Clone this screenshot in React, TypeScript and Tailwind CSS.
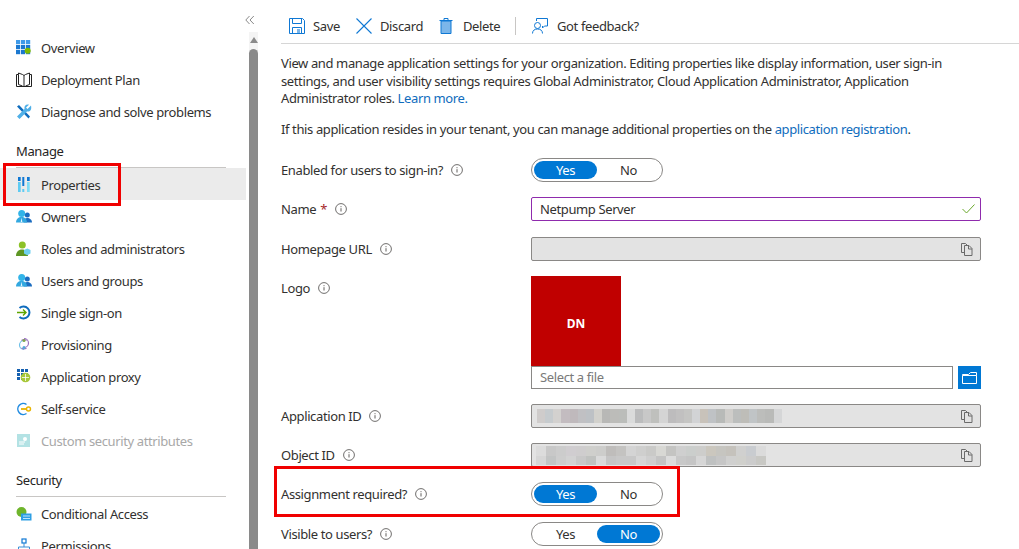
import type { ReactNode } from 'react';

function Overview() {
    return (
        <svg width="16" height="16" viewBox="0 0 16 16">
            {[0, 5, 10].map((x) => [0, 5, 10].map((y) => <rect key={`${x}-${y}`} x={x} y={y} width="4.2" height="4.2" fill={y === 0 ? '#3f9ae8' : '#1b78d0'} />))}
            <circle cx="11.7" cy="10.8" r="3" fill="#7fba00" />
        </svg>
    );
}

function Book() {
    return (
        <svg width="16" height="16" viewBox="0 0 16 16" fill="none" stroke="#222" strokeWidth="1">
            <path d="M.5 2.5h2V1l4 1.5 1.5 1 1.5-1L13.5 1v1.5h2v12h-15z M8 3.5v11 M2.5 2.5v10l4 1.5 M13.5 2.5v10l-4 1.5" />
        </svg>
    );
}

function Tools() {
    return (
        <svg width="16" height="16" viewBox="0 0 16 16">
            <path d="M1 2.5 3 1l11 11.5-1.5 2z" fill="#0f6cbd" />
            <path d="M15 1.5 11.5 5 10 3.5 13 .8C10 0 8 2 8.5 5L1 12.5 3.5 15 11 7.5c3 .5 5-1.5 4-6z" fill="#50b0e8" />
        </svg>
    );
}

function PropsIcon() {
    return (
        <svg width="16" height="16" viewBox="0 0 16 16">
            <rect x="2" y="0" width="2.7" height="4" fill="#0f78d4" />
            <rect x="2" y="5" width="2.7" height="10" fill="#5ecbf2" />
            <rect x="6.3" y="0" width="2" height="9" fill="#0f78d4" />
            <rect x="6.3" y="12" width="2" height="3" fill="#5ecbf2" />
            <rect x="11" y="0" width="2.700" height="4" fill="#0f78d4" />
            <rect x="11" y="5" width="2.700" height="10" fill="#7fdcf5" />
        </svg>
    );
}

function People() {
    return (
        <svg width="16" height="16" viewBox="0 0 16 16">
            <circle cx="11.3" cy="6" r="2.5" fill="#1b6cc0" />
            <path d="M7.5 13.5c0-3 1.5-4.500 3.800-4.500s4.700 1.500 4.700 4.500z" fill="#1b6cc0" />
            <circle cx="5.7" cy="4.5" r="3.5" fill="#32b4e8" />
            <path d="M0 13.5C0 10 2.500 8 5.500 8s5.500 2 5.500 5.500z" fill="#32a8e0" />
            <path d="M5.500 8.500 4.700 13h1.600z" fill="#e4f4ff" />
        </svg>
    );
}

function RoleIcon() {
    return (
        <svg width="16" height="16" viewBox="0 0 16 16">
            <circle cx="6.3" cy="4" r="3.5" fill="#8cc227" />
            <path d="M0 15c0-4 2.500-6.500 6-6.500s6 2.500 6 6.500z" fill="#5e9624" />
            <path d="M11.300 7.500 14.500 9v3.500l-3.200 1.800L8 12.500V9z" fill="#6fd0f0" />
        </svg>
    );
}

function Sso() {
    return (
        <svg width="16" height="16" viewBox="0 0 16 16" fill="none">
            <path d="M3.500 3a6 6 0 1 1 0 9" stroke="#0f6cbd" strokeWidth="2" />
            <path d="M1 7.500h9M7 4.500l3 3-3 3" stroke="#5ea500" strokeWidth="1.400" />
        </svg>
    );
}

function Provisioning() {
    return (
        <svg width="16" height="16" viewBox="0 0 16 16" fill="none" strokeWidth="1.200">
            <path d="M8 1.500a4.500 4.500 0 0 1 0 9" stroke="#9a70c0" />
            <path d="M8 3.500a4.500 4.500 0 0 0 0 9" stroke="#6fc0e8" />
            <path d="M5.500 3.500a4 4 0 0 1 5 0M5.500 11a4 4 0 0 0 5 0" stroke="#9a70c0" />
            <circle cx="8" cy="3.500" r="1.500" fill="#7fa84a" stroke="none" />
            <circle cx="8" cy="10.500" r="1.500" fill="#50a8d8" stroke="none" />
        </svg>
    );
}

function ProxyIcon() {
    return (
        <svg width="16" height="16" viewBox="0 0 16 16">
            {[1, 5, 9].map((x) => [0, 4, 8].map((y) => <rect key={`${x}-${y}`} x={x} y={y} width="3" height="3" fill="#1560b0" />))}
            <circle cx="9.500" cy="8.500" r="4.800" fill="#a8c83a" />
            <path d="M9.500 5v7M6 8.500h7" stroke="#fff" strokeWidth=".8" />
        </svg>
    );
}

function SelfService() {
    return (
        <svg width="16" height="16" viewBox="0 0 16 16" fill="none">
            <path d="M10.500 3.500a5.500 5.500 0 1 0 0 9" stroke="#1f8ae0" strokeWidth="1.500" />
            <path d="M5 8h6" stroke="#e8b400" strokeWidth="1.800" />
            <circle cx="12.500" cy="8" r="2" stroke="#e8b400" strokeWidth="1.400" />
        </svg>
    );
}

function CustomAttr() {
    return (
        <svg width="16" height="16" viewBox="0 0 16 16">
            <rect x="1" y="1" width="13" height="13" fill="#b3e2e4" />
            <circle cx="9" cy="6" r="2" fill="#fff" />
            <path d="M3 9h6M3 11h5" stroke="#fff" strokeWidth="1" />
        </svg>
    );
}

function Conditional() {
    return (
        <svg width="16" height="16" viewBox="0 0 16 16">
            <circle cx="5.500" cy="6" r="5" fill="#6fb52c" />
            <rect x="5" y="7.500" width="10.500" height="7" fill="#2f9fe4" />
            <path d="M7 10h7M7 12.500h7" stroke="#bfe6fb" strokeWidth="1" />
        </svg>
    );
}

function Permissions() {
    return (
        <svg width="16" height="16" viewBox="0 0 16 16" fill="none">
            <rect x="6" y="1" width="4" height="4" stroke="#0f78d4" strokeWidth="1.200" />
            <path d="M8 5v4M2.500 12V9h11v3" stroke="#3a8fd8" />
            <rect x="0" y="12" width="5" height="4" fill="#7fba00" />
            <rect x="11" y="12" width="5" height="4" fill="#7fba00" />
        </svg>
    );
}

function Info() {
    return (
        <svg width="12" height="12" viewBox="0 0 12 12" fill="none">
            <circle cx="6" cy="6" r="5.400" stroke="#605e5c" strokeWidth=".9" />
            <path d="M6 5.200v3.300M6 3.200v1" stroke="#605e5c" strokeWidth="1" />
        </svg>
    );
}

function Copy() {
    return (
        <svg width="12" height="13" viewBox="0 0 12 13" fill="none" stroke="#6a6a6a">
            <path d="M3.500 9.500h-3v-9h4l1.500 1.500" />
            <path d="M3.500 2.500h4.500l3 3v7h-7.500z" fill="#e3e3e3" />
            <path d="M7.500 2.500v3.500h3.500" />
        </svg>
    );
}

function NavItem({ icon, label, active, muted }: { icon: ReactNode; label: string; active?: boolean; muted?: boolean }) {
    return (
        <div className={`flex h-8 items-center gap-[9px] pl-4 pt-px ${active ? 'bg-[#ebebeb]' : ''}`}>
            <span className="flex w-4 justify-center">{icon}</span>
            <span className={muted ? 'text-[#a8a8a8]' : 'text-[#323130]'}>{label}</span>
        </div>
    );
}

function SectionTitle({ children }: { children: ReactNode }) {
    return <div className="mx-4 mt-[15px] h-[26px] w-[210px] border-b border-[#c8c6c4] text-[#252423]">{children}</div>;
}

function Toolbtn({ icon, label, className }: { icon: ReactNode; label: string; className: string }) {
    return (
        <div className={`flex items-center gap-[8px] text-[#323130] ${className}`}>
            {icon}
            <span>{label}</span>
        </div>
    );
}

function Toggle({ value }: { value: 'Yes' | 'No' }) {
    return (
        <div className="flex h-6 w-[132px] items-center rounded-full border border-[#8a8886] px-[2px]">
            <span className={`flex h-[18px] w-[63px] items-center justify-center rounded-full ${value === 'Yes' ? 'bg-[#0078d4] text-white' : 'text-[#323130]'}`}>Yes</span>
            <span className={`flex h-[18px] w-[63px] items-center justify-center rounded-full ${value === 'No' ? 'bg-[#0078d4] text-white' : 'text-[#323130]'}`}>No</span>
        </div>
    );
}

function Row({ label, required, children, className = 'mt-[15px]' }: { label: string; required?: boolean; children: ReactNode; className?: string }) {
    return (
        <div className={`flex items-start ${className}`}>
            <div className="flex h-6 w-[250px] items-center text-[#323130]">
                <span>{label}</span>
                {required && <span className="ml-[4px] text-[#a4262c]">*</span>}
                <span className="ml-[8px] flex"><Info /></span>
            </div>
            {children}
        </div>
    );
}

const appIdBlocks = ['#cfcccb', '#c6cbce', '#d3d1cf', '#c3bcc0', '#bfb9bc', '#c0c0c3', '#bdc1c5', '#d2d1cc', '#b8b8b6', '#bcbcb9', '#bbbdba', '#dadbdb', '#bbbcbd', '#c8c8c8', '#bfc0bd', '#d4d4d4', '#bdbcbd', '#c1c0c0', '#c5c5c3', '#d2d3d5', '#c8c2ba', '#bfc2c5', '#b8bab8', '#cfcdca', '#bcbebd', '#bebdb8', '#c0c4c6', '#bcbdbb', '#b9bab8', '#d5d6d7'];
const objTop = ['#dcdcdc', '#c8c8c8', '#cccccc', '#d0cdd0', '#cfcdce', '#cfcfcc', '#cdcdcb', '#bfbdbb', '#c4c3c1', '#d4d4d4', '#cfcfce', '#cacac8', '#d8d8d4', '#c4c4c2', '#cfcfcf', '#cbcecc', '#cdcdcb', '#cbc7be', '#c6c5c0', '#c5c2bc', '#d0d0cf', '#c9ccd0', '#dbdbdb'];
const objBot = ['#d6d6d6', '#c2c4c4', '#cdcdcd', '#d2d2d2', '#c8c8c8', '#c0c2c0', '#dadada', '#c5c5c5', '#c8c8c8', '#c8c8c8', '#d6d6d6', '#cfcfcf', '#c4c4c4', '#dcdcdc', '#c8c8c8', '#c5c5c5', '#d6d6d6', '#bfc1c1', '#c6c6c6', '#d0d0cf', '#d0d0cc', '#cccccc', '#c8c8c4'];

function ReadOnly({ children }: { children?: ReactNode }) {
    return (
        <div className="flex h-6 w-[450px] items-center justify-between rounded-[2px] border border-[#8a8886] bg-[#e3e3e3] pr-[7px]">
            <div>{children}</div>
            <Copy />
        </div>
    );
}

export default function App() {
    return (
        <div className="relative flex h-[549px] w-[1019px] overflow-hidden bg-white font-['Noto_Sans',sans-serif] text-[13px] leading-[18px] tracking-[-0.38px]">
            <div className="absolute left-[3px] top-[163px] h-[43px] w-[118px] border-[3px] border-[#f00000]" />
            <div className="absolute left-[274px] top-[466px] h-[51px] w-[406px] border-[3px] border-[#f00000]" />

            <aside className="w-[246px] shrink-0 pt-[31px]">
                <NavItem icon={<Overview />} label="Overview" />
                <NavItem icon={<Book />} label="Deployment Plan" />
                <NavItem icon={<Tools />} label="Diagnose and solve problems" />
                <SectionTitle>Manage</SectionTitle>
                <NavItem icon={<PropsIcon />} label="Properties" active />
                <NavItem icon={<People />} label="Owners" />
                <NavItem icon={<RoleIcon />} label="Roles and administrators" />
                <NavItem icon={<People />} label="Users and groups" />
                <NavItem icon={<Sso />} label="Single sign-on" />
                <NavItem icon={<Provisioning />} label="Provisioning" />
                <NavItem icon={<ProxyIcon />} label="Application proxy" />
                <NavItem icon={<SelfService />} label="Self-service" />
                <NavItem icon={<CustomAttr />} label="Custom security attributes" muted />
                <SectionTitle>Security</SectionTitle>
                <NavItem icon={<Conditional />} label="Conditional Access" />
                <NavItem icon={<Permissions />} label="Permissions" />
            </aside>

            <div className="relative w-3 shrink-0 pl-[3px]">
                <svg className="absolute left-[-1px] top-[15px]" width="10" height="10" viewBox="0 0 10 10" fill="none" stroke="#8a8a8a">
                    <path d="M4.500 1 .8 5l3.700 4M8.800 1 5 5l3.800 4" />
                </svg>
                <div className="mt-8 h-[517px] w-[9px] bg-[#f4f4f4]">
                    <div className="flex h-4 items-center justify-center">
                        <div className="h-0 w-0 border-x-[4px] border-b-[6px] border-x-transparent border-b-[#8a8a8a]" />
                    </div>
                    <div className="mt-px h-[500px] rounded-t-full bg-[#8a8a8a]" />
                </div>
            </div>

            <main className="flex-1 pl-[23px]">
                <div className="flex h-[44px] items-center border-b border-[#d6d6d6] pl-2 pt-[9px]">
                    <Toolbtn className="w-[67px]" label="Save" icon={
                        <svg width="16" height="16" viewBox="0 0 16 16" fill="none" stroke="#0f78d4"><path d="M.5 .5h13l2 2v13H.5z" /><path d="M3.500 .5v5h9v-5" /><path d="M3.500 15.500v-6h9v6" /><rect x="8" y="11" width="3" height="4" fill="#7bb6ea" stroke="none" /></svg>
                    } />
                    <Toolbtn className="w-[83px]" label="Discard" icon={
                        <svg width="16" height="16" viewBox="0 0 16 16" fill="none" stroke="#0f78d4" strokeWidth="1.100"><path d="m.5 .5 15 15M15.500 .5l-15 15" /></svg>
                    } />
                    <Toolbtn className="w-[76px] gap-[10px]" label="Delete" icon={
                        <svg width="14" height="16" viewBox="0 0 14 16" fill="none" stroke="#0f78d4"><path d="M2 3h10v12.500H2z" fill="#7bb6ea" /><path d="M.5 2.500h13M5 2.500V.5h4v2" /></svg>
                    } />
                    <div className="h-[18px] w-px bg-[#c8c6c4]" />
                    <Toolbtn className="ml-4 gap-[9px]" label="Got feedback?" icon={
                        <svg width="16" height="16" viewBox="0 0 16 16" fill="none" stroke="#0f78d4"><path d="M4.500 3V.5h11v7.500h-3l-2 2v-2" /><circle cx="5.500" cy="7.500" r="3" /><path d="M.5 15.500c0-3 2-4.500 5-4.500s5 1.500 5 4.500" /></svg>
                    } />
                </div>

                <div className="mt-[11px] w-[680px] leading-[17.5px] text-[#323130]">
                    View and manage application settings for your organization. Editing properties like display information, user sign-in settings, and user visibility settings requires Global Administrator, Cloud Application Administrator, Application Administrator roles. <span className="text-[#0f6cbd]">Learn more.</span>
                </div>
                <div className="mt-[13px] leading-[17.5px] text-[#323130]">
                    If this application resides in your tenant, you can manage additional properties on the <span className="text-[#0f6cbd]">application registration</span>.
                </div>

                <Row label="Enabled for users to sign-in?" className="mt-[20px]"><Toggle value="Yes" /></Row>
                <Row label="Name" required>
                    <div className="flex h-6 w-[450px] items-center justify-between rounded-[2px] border border-[#8f2bad] pl-2 pr-[5px] text-[#323130]">
                        <span>Netpump Server</span>
                        <svg width="13" height="10" viewBox="0 0 13 10" fill="none" stroke="#6aa82c"><path d="m.5 5 4 4 8-8.500" /></svg>
                    </div>
                </Row>
                <Row label="Homepage URL" className="mt-4"><ReadOnly /></Row>
                <Row label="Logo">
                    <div className="w-[450px]">
                        <div className="flex h-[90px] w-[90px] items-center justify-center bg-[#c00000] pt-[5px] text-[12px] font-bold tracking-normal text-white">DN</div>
                        <div className="flex justify-between">
                            <div className="flex h-[23px] w-[422px] items-center border border-[#8a8886] pb-px pl-2 text-[#7a7a7a]">Select a file</div>
                            <div className="flex h-[23px] w-[23px] items-center justify-center bg-[#0078d4]">
                                <svg width="15" height="12" viewBox="0 0 15 12" fill="none" stroke="#fff"><path d="M.5 3.500h14v8H.5zM.5 3.500l0-1h6l2-2h6v3" /></svg>
                            </div>
                        </div>
                    </div>
                </Row>
                <Row label="Application ID">
                    <ReadOnly>
                        <div className="ml-[5px] flex h-[14px]">
                            {appIdBlocks.map((c, i) => <div key={i} className="h-full w-[8.17px]" style={{ backgroundColor: c }} />)}
                        </div>
                    </ReadOnly>
                </Row>
                <Row label="Object ID">
                    <ReadOnly>
                        <div className="ml-[4px]">
                            <div className="flex h-[10px]">{objTop.map((c, i) => <div key={i} className="h-full w-[10px]" style={{ backgroundColor: c }} />)}</div>
                            <div className="flex h-[9px]">{objBot.map((c, i) => <div key={i} className="h-full w-[10px]" style={{ backgroundColor: c }} />)}</div>
                        </div>
                    </ReadOnly>
                </Row>
                <Row label="Assignment required?"><Toggle value="Yes" /></Row>
                <Row label="Visible to users?" className="mt-4"><Toggle value="No" /></Row>
            </main>
        </div>
    );
}
